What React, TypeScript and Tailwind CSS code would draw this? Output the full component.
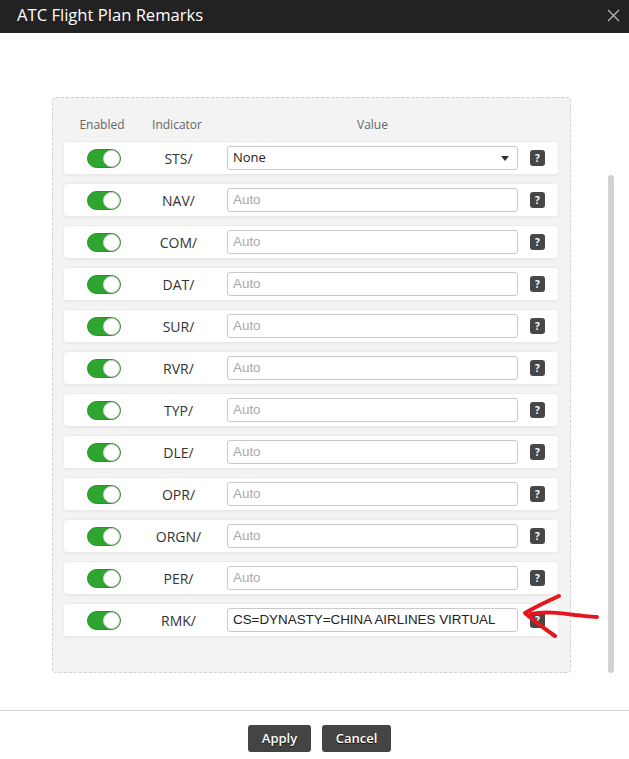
import React from "react";

const rows: { ind: string; value?: string; select?: boolean }[] = [
  { ind: "STS/", select: true },
  { ind: "NAV/" },
  { ind: "COM/" },
  { ind: "DAT/" },
  { ind: "SUR/" },
  { ind: "RVR/" },
  { ind: "TYP/" },
  { ind: "DLE/" },
  { ind: "OPR/" },
  { ind: "ORGN/" },
  { ind: "PER/" },
  { ind: "RMK/", value: "CS=DYNASTY=CHINA AIRLINES VIRTUAL" },
];

function Toggle() {
  return (
    <div className="relative w-[34px] h-[19px] rounded-full bg-[#2ea52e] border border-[#279227]">
      <div className="absolute right-[0px] top-[0px] w-[17px] h-[17px] rounded-full bg-white border border-[#d8d8d8]" />
    </div>
  );
}

function Help() {
  return (
    <div className="w-[15px] h-[16px] rounded-[3px] bg-[#474747] flex items-center justify-center text-white text-[10px] font-bold leading-none [font-family:'Open_Sans',sans-serif]">
      ?
    </div>
  );
}

export default function App() {
  return (
    <div className="relative w-[629px] h-[759px] bg-white overflow-hidden [font-family:'Open_Sans',sans-serif]">
      <div className="h-[33px] bg-[#222222] flex items-center pl-[17px] pr-[9px]">
        <div className="text-white text-[16.6px] leading-none flex-1 pb-[2px]">ATC Flight Plan Remarks</div>
        <svg width="13" height="13" viewBox="0 0 13 13" className="mb-[2px]">
          <path d="M1 1 L12 12 M12 1 L1 12" stroke="#bdbdbd" strokeWidth="1.2" />
        </svg>
      </div>

      <div className="h-[677px] flex">
        <div className="ml-[52px] mt-[64px] w-[519px] h-[576px] bg-[#f3f3f3] border border-dashed border-[#d2d2d2] rounded-[4px] pl-[10px] pr-[11px] pt-[17px]">
          <div className="flex h-[20px] items-center text-[12px] text-[#666] mb-[6px]">
            <div className="w-[78px] text-center">Enabled</div>
            <div className="w-[72px] text-center">Indicator</div>
            <div className="w-[291px] ml-[14px] text-center">Value</div>
          </div>
          <div className="flex flex-col gap-[8px]">
            {rows.map((r) => (
              <div
                key={r.ind}
                className="h-[34px] w-[496px] bg-white rounded-[4px] border border-[#ebebeb] shadow-[0_1px_1px_rgba(0,0,0,0.04)] flex items-center"
              >
                <div className="w-[79px] flex justify-center">
                  <Toggle />
                </div>
                <div className="w-[71px] text-center text-[14px] text-[#333]">{r.ind}</div>
                <div className="ml-[13px] w-[291px] h-[24px] rounded-[3px] border border-[#c9c9c9] bg-white flex items-center pl-[5px] pr-[8px]">
                  {r.select ? (
                    <>
                      <span className="flex-1 text-[13px] text-[#222]">None</span>
                      <svg width="8" height="5" viewBox="0 0 8 5">
                        <path d="M0 0 H8 L4 5 Z" fill="#333" />
                      </svg>
                    </>
                  ) : r.value ? (
                    <span className="text-[13.4px] text-[#222] [font-family:'Liberation_Sans',Arial,sans-serif]">{r.value}</span>
                  ) : (
                    <span className="text-[13.4px] text-[#a9a9a9] [font-family:'Liberation_Sans',Arial,sans-serif]">Auto</span>
                  )}
                </div>
                <div className="ml-[12px]">
                  <Help />
                </div>
              </div>
            ))}
          </div>
        </div>
        <div className="ml-[37px] mt-[142px] w-[6px] h-[498px] rounded-[3px] bg-[#d2d2d6]" />
      </div>

      <div className="border-t border-[#cfcfcf] flex justify-center gap-[11px] pt-[14px] pl-[10px]">
        <button className="h-[27px] w-[63px] rounded-[3px] bg-[#444] text-white text-[13px] font-semibold [text-shadow:0_1px_1px_rgba(0,0,0,0.8)]">
          Apply
        </button>
        <button className="h-[27px] w-[69px] rounded-[3px] bg-[#444] text-white text-[13px] font-semibold [text-shadow:0_1px_1px_rgba(0,0,0,0.8)]">
          Cancel
        </button>
      </div>

      <svg className="absolute left-0 top-0 pointer-events-none" width="629" height="759" viewBox="0 0 629 759">
        <path
          d="M559 596 C548 601 535 607 525 613 C533 620 545 629 555 636"
          fill="none"
          stroke="#e3161d"
          strokeWidth="4"
          strokeLinecap="round"
          strokeLinejoin="round"
        />
        <path
          d="M531 614 C545 611 560 613 575 615 C585 616 592 617 597 617"
          fill="none"
          stroke="#e3161d"
          strokeWidth="4"
          strokeLinecap="round"
        />
      </svg>
    </div>
  );
}
